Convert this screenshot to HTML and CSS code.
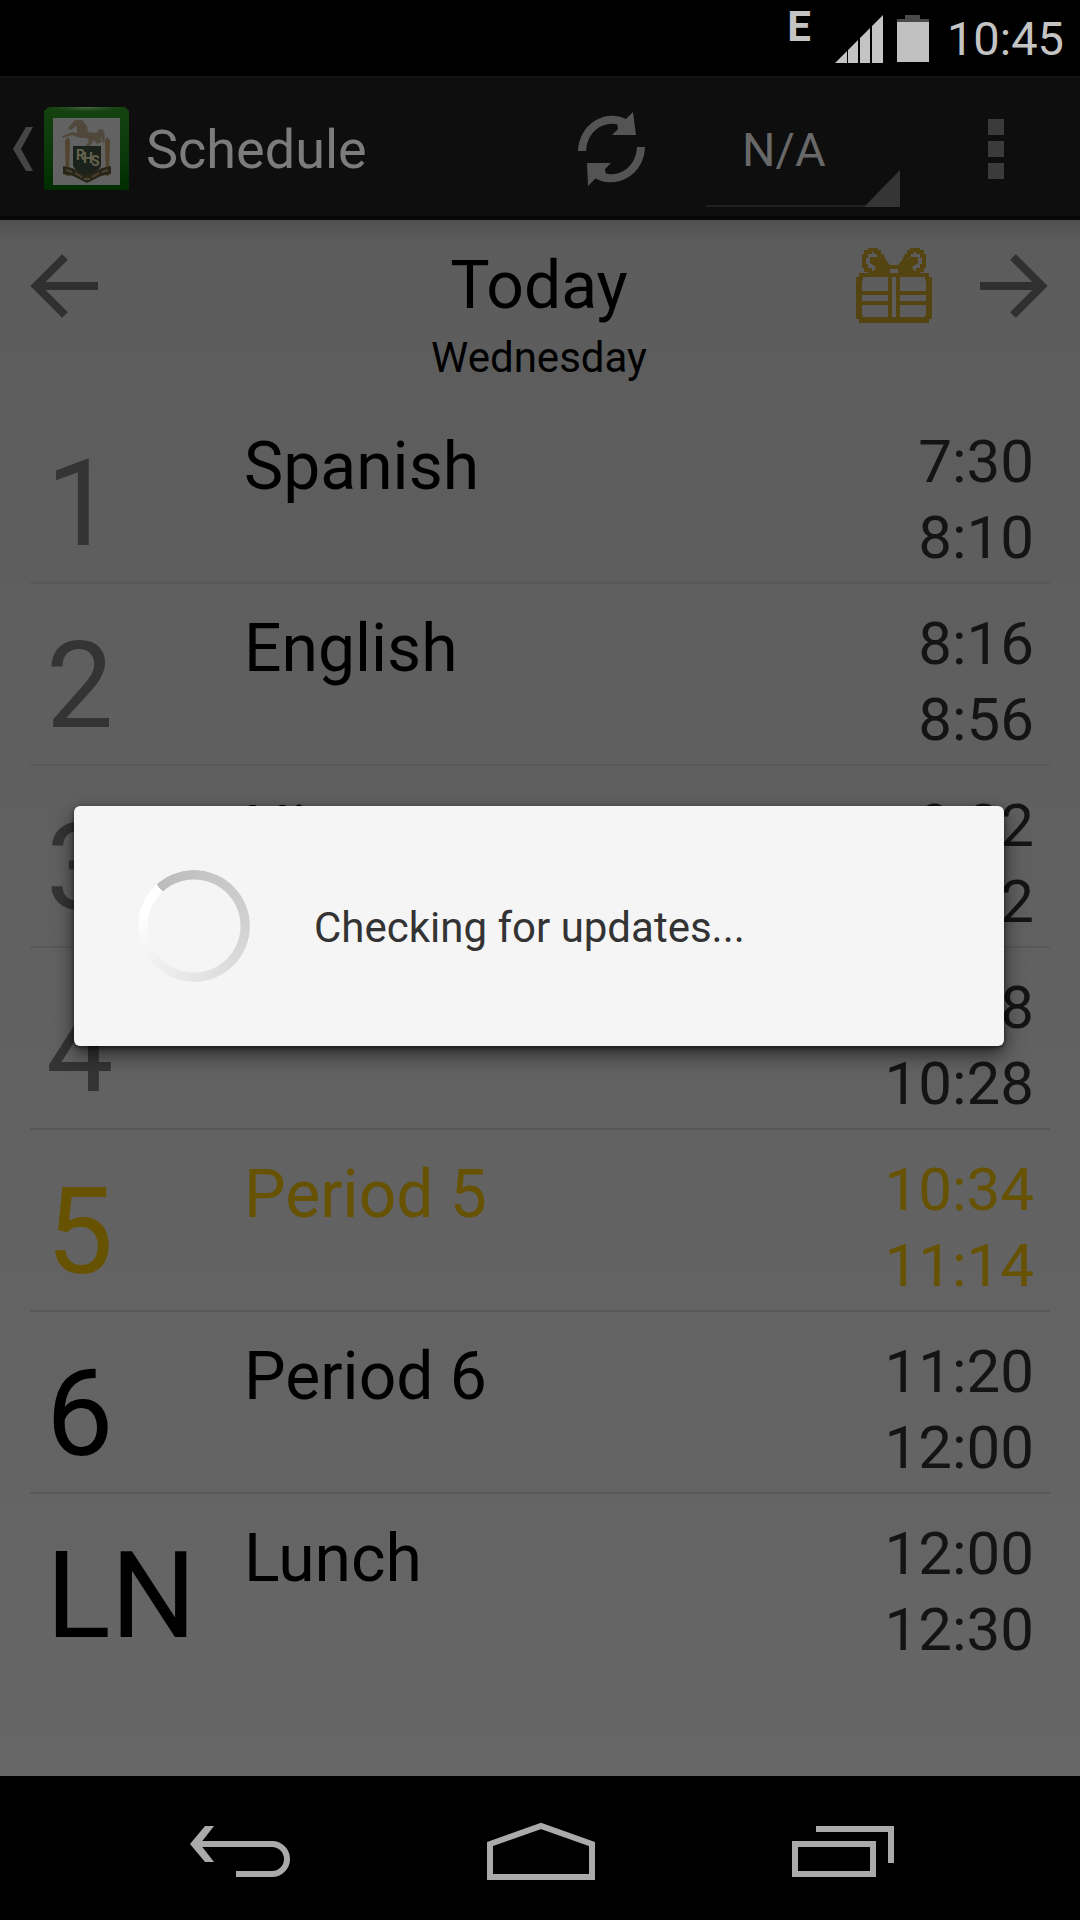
FILE: index.html
```html
<!DOCTYPE html>
<html lang="en">
<head>
<meta charset="utf-8">
<meta name="viewport" content="width=device-width, initial-scale=1">
<title>Schedule</title>
<link rel="stylesheet" href="styles.css">
</head>
<body>
<div class="screen">
  <div class="status-bar">
    <span class="network">E</span>
    <svg class="signal" width="48" height="48" viewBox="0 0 48 48" aria-hidden="true"><path d="M0 48L12 36V48ZM13 35L23 25V48H13ZM25 23L35 13V48H25ZM37 11L48 0V48H37Z" fill="#c4c4c4"/></svg>
    <svg class="battery" width="32" height="48" viewBox="0 0 32 48" aria-hidden="true"><path d="M8 0H23V4H32V7H0V4H8Z" fill="#4a4a4a"/><path d="M0 7H32V47H0Z" fill="#c0c0c0"/></svg>
    <time class="clock">10:45</time>
  </div>

  <header class="action-bar">
    <button class="up" aria-label="Navigate up">
      <svg width="22" height="44" viewBox="0 0 22 44"><path d="M14 0H21L9 22L21 44H14L1 22Z" fill="#454545"/></svg>
      <svg class="logo" width="86" height="86" viewBox="0 0 86 86">
        <defs>
          <linearGradient id="frame" x1="0" y1="0" x2="0" y2="1"><stop offset="0" stop-color="#14420f"/><stop offset=".6" stop-color="#0b380a"/><stop offset="1" stop-color="#002d00"/></linearGradient>
          <radialGradient id="shine" cx=".5" cy="0" r=".5"><stop offset="0" stop-color="#4f6b4e"/><stop offset="1" stop-color="#14420f" stop-opacity="0"/></radialGradient>
        </defs>
        <path d="M5 1H81L85 5V84H0V5Z" fill="url(#frame)"/>
        <rect y="1" width="85" height="12" fill="url(#shine)"/>
        <rect x="9" y="12" width="67" height="67" fill="#626262"/>
        <path d="M24 22L31 14L38 14L43 20L44 26L53 27Q55 21 59 24Q62 29 60 38Q58 32 56 30L58 36L53 38L50 34L46 40L40 41L45 36L43 32L36 32L28 29L19 32L18 30L29 26L33 27L33 20L26 24Z" fill="#51483c"/>
        <path d="M21 35L24 31L26 35L25 70H22ZM61 35L63 31L66 35L65 70H62Z" fill="#51432d"/>
        <path d="M29 40H57V60Q53 67 43 70Q33 67 29 60Z" fill="#1b221c"/>
        <path d="M19 60L28 62L43 69L58 62L67 60V68L57 70L43 77L29 70L19 68Z" fill="#2a2519"/>
        <path d="M22 64L28 66M31 67L38 71M48 71L55 67M58 66L64 64M40 73H46" stroke="#494433" stroke-width="2"/>
        <text x="32" y="54" class="crest">R</text>
        <text x="39" y="57" class="crest">H</text>
        <text x="47" y="60" class="crest">S</text>
      </svg>
    </button>
    <h1 class="title">Schedule</h1>
    <button class="refresh" aria-label="Refresh">
      <svg width="68" height="74" viewBox="0 0 68 74"><path d="M4 39A30 32 0 0 1 49 12M63 35A30 32 0 0 1 18 62" fill="none" stroke="#545454" stroke-width="8"/><path d="M55 0L58 23H34L40 17L39 10L47 8ZM9 51H33L27 57L28 64L18 66L10 74Z" fill="#545454"/></svg>
    </button>
    <div class="spinner">
      <select aria-label="Section"><option>N/A</option></select>
      <svg width="36" height="37" viewBox="0 0 36 37" aria-hidden="true"><path d="M36 0V37H0Z" fill="#353535"/></svg>
    </div>
    <button class="overflow" aria-label="More options">
      <svg width="16" height="60" viewBox="0 0 16 60"><path d="M0 0H16V16H0ZM0 22H16V38H0ZM0 44H16V60H0Z" fill="#3b3b3b"/></svg>
    </button>
  </header>

  <main class="content">
    <div class="day-header">
      <button class="arrow" aria-label="Previous day">
        <svg width="68" height="64" viewBox="0 0 68 64"><path d="M68 32H8M35 3L6 32L35 61" fill="none" stroke="#303030" stroke-width="8"/></svg>
      </button>
      <div class="day">
        <h2>Today</h2>
        <p>Wednesday</p>
      </div>
      <div class="day-actions">
        <button class="gift" aria-label="Special day">
          <svg width="76" height="76" viewBox="0 0 76 76" fill="none" stroke="#544412" stroke-width="4"><path d="M5 28H71V32H74V70H71V74H5V70H2V32H5Z"/><path d="M3 31V71M73 31V71" stroke-width="6"/><path d="M4 46H34M42 46H72M4 56H34M42 56H72M34 30V73M42 30V73M32 20H44M3 72H73"/><path d="M18 26H14V23H10V19H8V9H10V5H14V3H20V5H23V9H26L28 14L34 21M58 26H62V23H66V19H68V9H66V5H62V3H56V5H53V9H50L48 14L42 21"/><path d="M14 10H20L28 13L34 20L34 26L38 29H18V23L20 20L14 16ZM62 10H56L48 13L42 20L42 26L38 29H58V23L56 20L62 16Z" fill="#544412" stroke="none"/></svg>
        </button>
        <button class="arrow" aria-label="Next day">
          <svg width="68" height="64" viewBox="0 0 68 64"><path d="M0 32H60M33 3L62 32L33 61" fill="none" stroke="#303030" stroke-width="8"/></svg>
        </button>
      </div>
    </div>

    <ol class="periods">
      <li class="period past"><span class="number">1</span><span class="name">Spanish</span><span class="times"><time>7:30</time><time>8:10</time></span></li>
      <li class="period past"><span class="number">2</span><span class="name">English</span><span class="times"><time>8:16</time><time>8:56</time></span></li>
      <li class="period past"><span class="number">3</span><span class="name">History</span><span class="times"><time>9:02</time><time>9:42</time></span></li>
      <li class="period past"><span class="number">4</span><span class="name">Period 4</span><span class="times"><time>9:48</time><time>10:28</time></span></li>
      <li class="period current"><span class="number">5</span><span class="name">Period 5</span><span class="times"><time>10:34</time><time>11:14</time></span></li>
      <li class="period"><span class="number">6</span><span class="name">Period 6</span><span class="times"><time>11:20</time><time>12:00</time></span></li>
      <li class="period"><span class="number">LN</span><span class="name">Lunch</span><span class="times"><time>12:00</time><time>12:30</time></span></li>
    </ol>
  </main>

  <nav class="nav-bar">
    <button aria-label="Back"><svg width="100" height="56" viewBox="0 0 100 56"><path d="M5 21H82A15 15 0 0 1 82 51H46" fill="none" stroke="#aaa" stroke-width="6"/><path d="M15 3H24L10 21L24 39H15L0 21Z" fill="#aaa"/></svg></button>
    <button aria-label="Home"><svg width="108" height="58" viewBox="0 0 108 58"><path d="M3 55V22L54 4L105 22V55Z" fill="none" stroke="#aaa" stroke-width="6"/></svg></button>
    <button aria-label="Recent apps"><svg width="102" height="52" viewBox="0 0 102 52"><path d="M3 19H81V49H3ZM24 4H99V38" fill="none" stroke="#aaa" stroke-width="6"/></svg></button>
  </nav>

  <div class="overlay">
    <div class="dialog" role="dialog" aria-label="Checking for updates">
      <span class="progress"></span>
      <p>Checking for updates...</p>
    </div>
  </div>
</div>
</body>
</html>
```
FILE: styles.css
```css
* {
  box-sizing: border-box;
}

body,
h1,
h2,
p,
ol {
  margin: 0;
  padding: 0;
  font-weight: 400;
}

body {
  background: #000;
  color: #000;
  font-family: Roboto, "Liberation Sans", sans-serif;
}

button {
  padding: 0;
  border: 0;
  background: none;
  color: inherit;
  font: inherit;
}

svg {
  display: block;
}

.screen {
  position: relative;
  display: flex;
  flex-direction: column;
  min-height: 100vh;
}

/* System status bar */

.status-bar {
  display: flex;
  align-items: center;
  justify-content: flex-end;
  height: 76px;
  padding: 2px 16px 0 0;
  color: #c4c4c4;
}

.network {
  align-self: flex-start;
  margin: 2px 24px 0 0;
  font-size: 42px;
  font-weight: 700;
  line-height: 46px;
}

.signal {
  margin-right: 14px;
}

.battery {
  margin-right: 18px;
}

.clock {
  font-size: 47px;
  line-height: 56px;
}

/* Action bar */

.action-bar {
  display: flex;
  align-items: center;
  height: 144px;
  padding: 3px 76px 0 12px;
  border-top: 2px solid #141414;
  border-bottom: 4px solid #080808;
  background: #0e0e0e;
  color: #7c7c7c;
}

.up {
  display: flex;
  align-items: center;
  gap: 10px;
}

.crest {
  fill: #66644f;
  font-size: 14px;
  font-weight: 700;
}

.title {
  flex: 1;
  padding: 2px 0 0 16px;
  font-size: 54px;
  line-height: 64px;
}

.refresh {
  margin-right: 60px;
}

.spinner {
  position: relative;
  align-self: stretch;
  width: 194px;
  margin: 0 88px 9px 0;
  border-bottom: 2px solid #202020;
}

.spinner select {
  width: 100%;
  height: 100%;
  padding: 14px 36px 0;
  border: 0;
  background: none;
  color: #686868;
  font: 47px/56px Roboto, "Liberation Sans", sans-serif;
  appearance: none;
}

.spinner svg {
  position: absolute;
  right: 0;
  bottom: -2px;
}

/* Schedule */

.content {
  flex: 1;
  padding: 0 30px;
  background: linear-gradient(#505050, #5c5c5c 20px, #666);
}

.day-header {
  display: grid;
  grid-template-columns: 1fr auto 1fr;
  align-items: start;
  height: 182px;
  padding: 27px 2px 0 0;
}

.day {
  text-align: center;
}

.day h2 {
  font-size: 66px;
  line-height: 78px;
}

.day p {
  padding-top: 8px;
  font-size: 42px;
  line-height: 50px;
}

.arrow {
  justify-self: start;
  padding-top: 7px;
}

.day-actions {
  display: flex;
  align-items: flex-start;
  justify-content: flex-end;
  gap: 48px;
}

.periods {
  list-style: none;
}

.period {
  display: grid;
  grid-template-columns: 198px 1fr auto;
  align-items: start;
  height: 182px;
  padding: 22px 16px 0;
  border-bottom: 2px solid #585858;
}

.period:last-child {
  border-bottom: 0;
}

.number {
  padding-top: 10px;
  font-size: 120px;
  line-height: 140px;
}

.name {
  padding-top: 4px;
  font-size: 66px;
  line-height: 78px;
}

.times {
  display: flex;
  flex-direction: column;
  color: #141414;
  font-size: 60px;
  line-height: 76px;
  text-align: right;
}

.past .number {
  color: #343434;
}

.current,
.current .times {
  color: #665200;
}

/* System navigation bar */

.nav-bar {
  display: flex;
  align-items: center;
  justify-content: space-between;
  height: 144px;
  padding: 6px 186px 0 190px;
}

/* Progress dialog */

.overlay {
  position: absolute;
  inset: 76px 0 144px;
  display: flex;
  align-items: center;
  padding: 0 76px 0 74px;
}

.dialog {
  display: flex;
  align-items: center;
  gap: 64px;
  width: 100%;
  height: 240px;
  padding-left: 64px;
  border-radius: 6px;
  background: #f5f5f5;
  box-shadow: 0 8px 20px rgba(0, 0, 0, .6), 0 2px 4px rgba(0, 0, 0, .5);
}

.progress {
  width: 112px;
  height: 112px;
  border-radius: 50%;
  background: conic-gradient(from -42deg, #bcbcbc, #d0d0d0 35%, #e4e4e4 60%, #f5f5f5 80%, #fff 90%, #fff);
  mask: radial-gradient(closest-side, transparent 46px, #000 47px);
}

.dialog p {
  padding-top: 4px;
  color: #333;
  font-size: 42px;
  line-height: 50px;
}
```
